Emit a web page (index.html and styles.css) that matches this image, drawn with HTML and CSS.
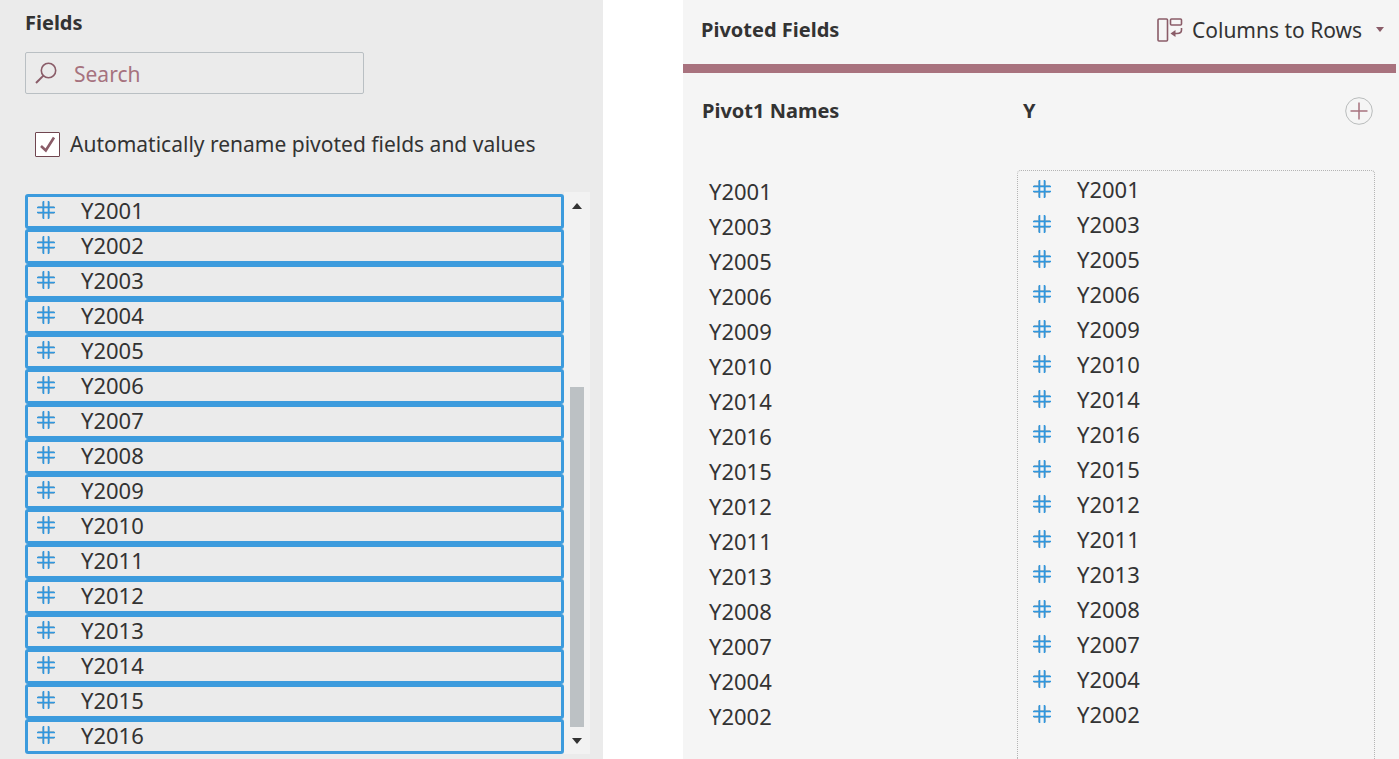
FILE: index.html
```html
<!DOCTYPE html>
<html lang="en">
<head>
<meta charset="utf-8">
<meta name="viewport" content="width=device-width, initial-scale=1">
<title>Pivot fields</title>
<link rel="stylesheet" href="styles.css">
</head>
<body>
<svg class="sprite" aria-hidden="true">
  <symbol id="hash" viewBox="0 0 18 18">
    <path d="M1 5.5H17M1 12.5H17M5.500 1V17M12.500 1V17" stroke="#9aa9b3" stroke-width="0.8"/>
    <path d="M0 6.500H18M0 11.500H18" stroke="#2f97e0" stroke-width="1.6"/>
    <path d="M6.500 0V18M11.500 0V18" stroke="#2f97e0" stroke-width="1.6"/>
  </symbol>
</svg>
<main class="app">
  <section class="fields">
    <h2 class="title">Fields</h2>
    <label class="search">
      <svg class="search-icon" viewBox="0 0 22 22" fill="none" aria-hidden="true"><circle cx="13.5" cy="8.5" r="7.2" stroke="#8a5c68" stroke-width="1.6"/><path d="M8.4 13.6L1 21" stroke="#8a5c68" stroke-width="2"/></svg>
      <input class="search-input" type="search" placeholder="Search" aria-label="Search">
    </label>
    <label class="rename">
      <span class="tick">
        <input class="tick-input" type="checkbox" checked>
        <svg class="tick-mark" viewBox="0 0 25 25" fill="none" aria-hidden="true"><path d="M6 14L10.800 18.500L19 5.500" stroke="#8a5c68" stroke-width="2.6"/></svg>
      </span>
      <span>Automatically rename pivoted fields and values</span>
    </label>
    <div class="picker">
      <ul class="rows">
        <li class="row"><svg class="hash"><use href="#hash"/></svg>Y2001</li>
        <li class="row"><svg class="hash"><use href="#hash"/></svg>Y2002</li>
        <li class="row"><svg class="hash"><use href="#hash"/></svg>Y2003</li>
        <li class="row"><svg class="hash"><use href="#hash"/></svg>Y2004</li>
        <li class="row"><svg class="hash"><use href="#hash"/></svg>Y2005</li>
        <li class="row"><svg class="hash"><use href="#hash"/></svg>Y2006</li>
        <li class="row"><svg class="hash"><use href="#hash"/></svg>Y2007</li>
        <li class="row"><svg class="hash"><use href="#hash"/></svg>Y2008</li>
        <li class="row"><svg class="hash"><use href="#hash"/></svg>Y2009</li>
        <li class="row"><svg class="hash"><use href="#hash"/></svg>Y2010</li>
        <li class="row"><svg class="hash"><use href="#hash"/></svg>Y2011</li>
        <li class="row"><svg class="hash"><use href="#hash"/></svg>Y2012</li>
        <li class="row"><svg class="hash"><use href="#hash"/></svg>Y2013</li>
        <li class="row"><svg class="hash"><use href="#hash"/></svg>Y2014</li>
        <li class="row"><svg class="hash"><use href="#hash"/></svg>Y2015</li>
        <li class="row"><svg class="hash"><use href="#hash"/></svg>Y2016</li>
      </ul>
      <div class="scroll">
        <button class="scroll-button" type="button" aria-label="Scroll up"><svg class="scroll-arrow" viewBox="0 0 10 6"><path d="M0 6L5 0L10 6Z" fill="#333"/></svg></button>
        <div class="scroll-track"><div class="scroll-thumb"></div></div>
        <button class="scroll-button" type="button" aria-label="Scroll down"><svg class="scroll-arrow" viewBox="0 0 10 6"><path d="M0 0L5 6L10 0Z" fill="#333"/></svg></button>
      </div>
    </div>
  </section>

  <section class="pivot">
    <header class="pivot-head">
      <h2 class="title">Pivoted Fields</h2>
      <div class="mode">
        <svg class="mode-icon" viewBox="0 0 26 24" fill="none" stroke="#8a5c68" stroke-width="1.6" aria-hidden="true"><rect x="1" y="1" width="9.500" height="22" rx="1"/><rect x="13.500" y="1" width="11" height="6" rx="1"/><path d="M24.500 10V12Q24.500 15.500 20 15.500H16"/><path d="M18.500 12L13.500 15.500L18.500 19Z" fill="#8a5c68" stroke="none"/></svg>
        <select class="mode-select" aria-label="Pivot type"><option>Columns to Rows</option><option>Rows to Columns</option></select>
        <svg class="mode-arrow" viewBox="0 0 8 5" aria-hidden="true"><path d="M0 0H8L4 5Z" fill="#8a5c68"/></svg>
      </div>
    </header>
    <div class="pivot-body">
      <div class="names">
        <h3 class="title">Pivot1 Names</h3>
        <ul class="name-list">
          <li class="name">Y2001</li>
          <li class="name">Y2003</li>
          <li class="name">Y2005</li>
          <li class="name">Y2006</li>
          <li class="name">Y2009</li>
          <li class="name">Y2010</li>
          <li class="name">Y2014</li>
          <li class="name">Y2016</li>
          <li class="name">Y2015</li>
          <li class="name">Y2012</li>
          <li class="name">Y2011</li>
          <li class="name">Y2013</li>
          <li class="name">Y2008</li>
          <li class="name">Y2007</li>
          <li class="name">Y2004</li>
          <li class="name">Y2002</li>
        </ul>
      </div>
      <div class="values">
        <div class="values-head">
          <h3 class="title">Y</h3>
          <button class="add" type="button" aria-label="Add pivot values"><svg class="add-icon" viewBox="0 0 28 28" fill="none"><circle cx="14" cy="14" r="13.300" stroke="#b9bcbc"/><path d="M5.500 14H22.500M14 5.500V22.500" stroke="#a6727e" stroke-width="1.500"/></svg></button>
        </div>
        <ul class="value-list">
          <li class="value"><svg class="hash"><use href="#hash"/></svg>Y2001</li>
          <li class="value"><svg class="hash"><use href="#hash"/></svg>Y2003</li>
          <li class="value"><svg class="hash"><use href="#hash"/></svg>Y2005</li>
          <li class="value"><svg class="hash"><use href="#hash"/></svg>Y2006</li>
          <li class="value"><svg class="hash"><use href="#hash"/></svg>Y2009</li>
          <li class="value"><svg class="hash"><use href="#hash"/></svg>Y2010</li>
          <li class="value"><svg class="hash"><use href="#hash"/></svg>Y2014</li>
          <li class="value"><svg class="hash"><use href="#hash"/></svg>Y2016</li>
          <li class="value"><svg class="hash"><use href="#hash"/></svg>Y2015</li>
          <li class="value"><svg class="hash"><use href="#hash"/></svg>Y2012</li>
          <li class="value"><svg class="hash"><use href="#hash"/></svg>Y2011</li>
          <li class="value"><svg class="hash"><use href="#hash"/></svg>Y2013</li>
          <li class="value"><svg class="hash"><use href="#hash"/></svg>Y2008</li>
          <li class="value"><svg class="hash"><use href="#hash"/></svg>Y2007</li>
          <li class="value"><svg class="hash"><use href="#hash"/></svg>Y2004</li>
          <li class="value"><svg class="hash"><use href="#hash"/></svg>Y2002</li>
        </ul>
      </div>
    </div>
  </section>
</main>
</body>
</html>
```
FILE: styles.css
```css
* { box-sizing: border-box; }
body {
  margin: 0;
  background: #fff;
  color: #333;
  font: 22px/28px "Noto Sans", sans-serif;
}
ul { list-style: none; margin: 0; padding: 0; }
.sprite { position: absolute; width: 0; height: 0; }
.app {
  display: grid;
  grid-template-columns: 603fr 716fr;
  column-gap: 80px;
  min-height: 100vh;
}
.title { margin: 0; font-size: 20px; line-height: 28px; font-weight: 700; }

/* Source fields */
.fields { background: #ebebeb; padding: 9px 13px 5px 25px; }
.search {
  display: flex;
  align-items: center;
  gap: 17px;
  width: 60%;
  height: 42px;
  margin-top: 15px;
  padding: 0 9px;
  border: 1px solid #b9bfc3;
  border-radius: 2px;
}
.search-icon { flex: none; width: 22px; height: 22px; }
.search-input {
  flex: 1;
  min-width: 0;
  padding: 2px 0 0;
  border: 0;
  outline: 0;
  background: transparent;
  color: #333;
  font: inherit;
  font-size: 21px;
}
.search-input::placeholder { color: #a6727e; opacity: 1; }
.rename {
  display: flex;
  align-items: center;
  gap: 10px;
  margin: 36px 0 34px;
  padding-left: 10px;
  font-size: 21px;
  white-space: nowrap;
}
.tick { display: grid; flex: none; }
.tick-input, .tick-mark { grid-area: 1 / 1; width: 25px; height: 25px; margin: 0; }
.tick-input {
  appearance: none;
  border: 1px solid #704650;
  border-radius: 1px;
  background: #fff;
}
.tick-mark { visibility: hidden; pointer-events: none; }
.tick-input:checked + .tick-mark { visibility: visible; }
.picker { display: flex; }
.rows { flex: 1; padding-top: 2px; }
.row {
  display: flex;
  align-items: center;
  gap: 26px;
  height: 35px;
  padding: 0 0 3px 9px;
  border: 3px solid #3c9bdd;
  border-radius: 3px;
}
.hash { flex: none; width: 18px; height: 18px; }
.scroll {
  display: flex;
  flex-direction: column;
  width: 26px;
  background: #f2f2f2;
}
.scroll-button {
  display: flex;
  align-items: center;
  justify-content: center;
  height: 27px;
  padding: 0;
  border: 0;
  background: transparent;
}
.scroll-arrow { width: 10px; height: 6px; }
.scroll-track { display: flex; flex: 1; flex-direction: column; justify-content: flex-end; align-items: center; }
.scroll-thumb { width: 14px; height: 67%; background: #bcc1c4; }

/* Pivot result */
.pivot { display: flex; flex-direction: column; background: #f5f5f5; }
.pivot-head {
  display: flex;
  align-items: center;
  justify-content: space-between;
  height: 73px;
  margin-right: 3px;
  padding: 0 12px 5px 18px;
  border-bottom: 9px solid #a8727e;
}
.mode { display: flex; align-items: center; }
.mode-icon { width: 26px; height: 24px; }
.mode-select {
  appearance: none;
  margin: 0 13px 0 9px;
  padding: 0;
  border: 0;
  background: transparent;
  color: #333;
  font: inherit;
  font-size: 21px;
}
.mode-arrow { width: 8px; height: 5px; }
.pivot-body {
  display: grid;
  flex: 1;
  grid-template-columns: 315fr 358fr;
  padding: 24px 24px 0 19px;
}
.names .title { margin-bottom: 49px; }
.name { height: 35px; padding-left: 7px; line-height: 35px; }
.values { display: flex; flex-direction: column; }
.values-head {
  display: flex;
  align-items: center;
  justify-content: space-between;
  height: 28px;
  margin-bottom: 45px;
  padding: 0 2px 0 6px;
}
.add { width: 28px; height: 28px; padding: 0; border: 0; background: transparent; }
.add-icon { display: block; width: 28px; height: 28px; }
.value-list {
  flex: 1;
  padding: 0 15px;
  border: 1px dotted #b4b4b4;
  border-bottom: 0;
  border-radius: 4px 4px 0 0;
}
.value { display: flex; align-items: center; gap: 26px; height: 35px; }
```
